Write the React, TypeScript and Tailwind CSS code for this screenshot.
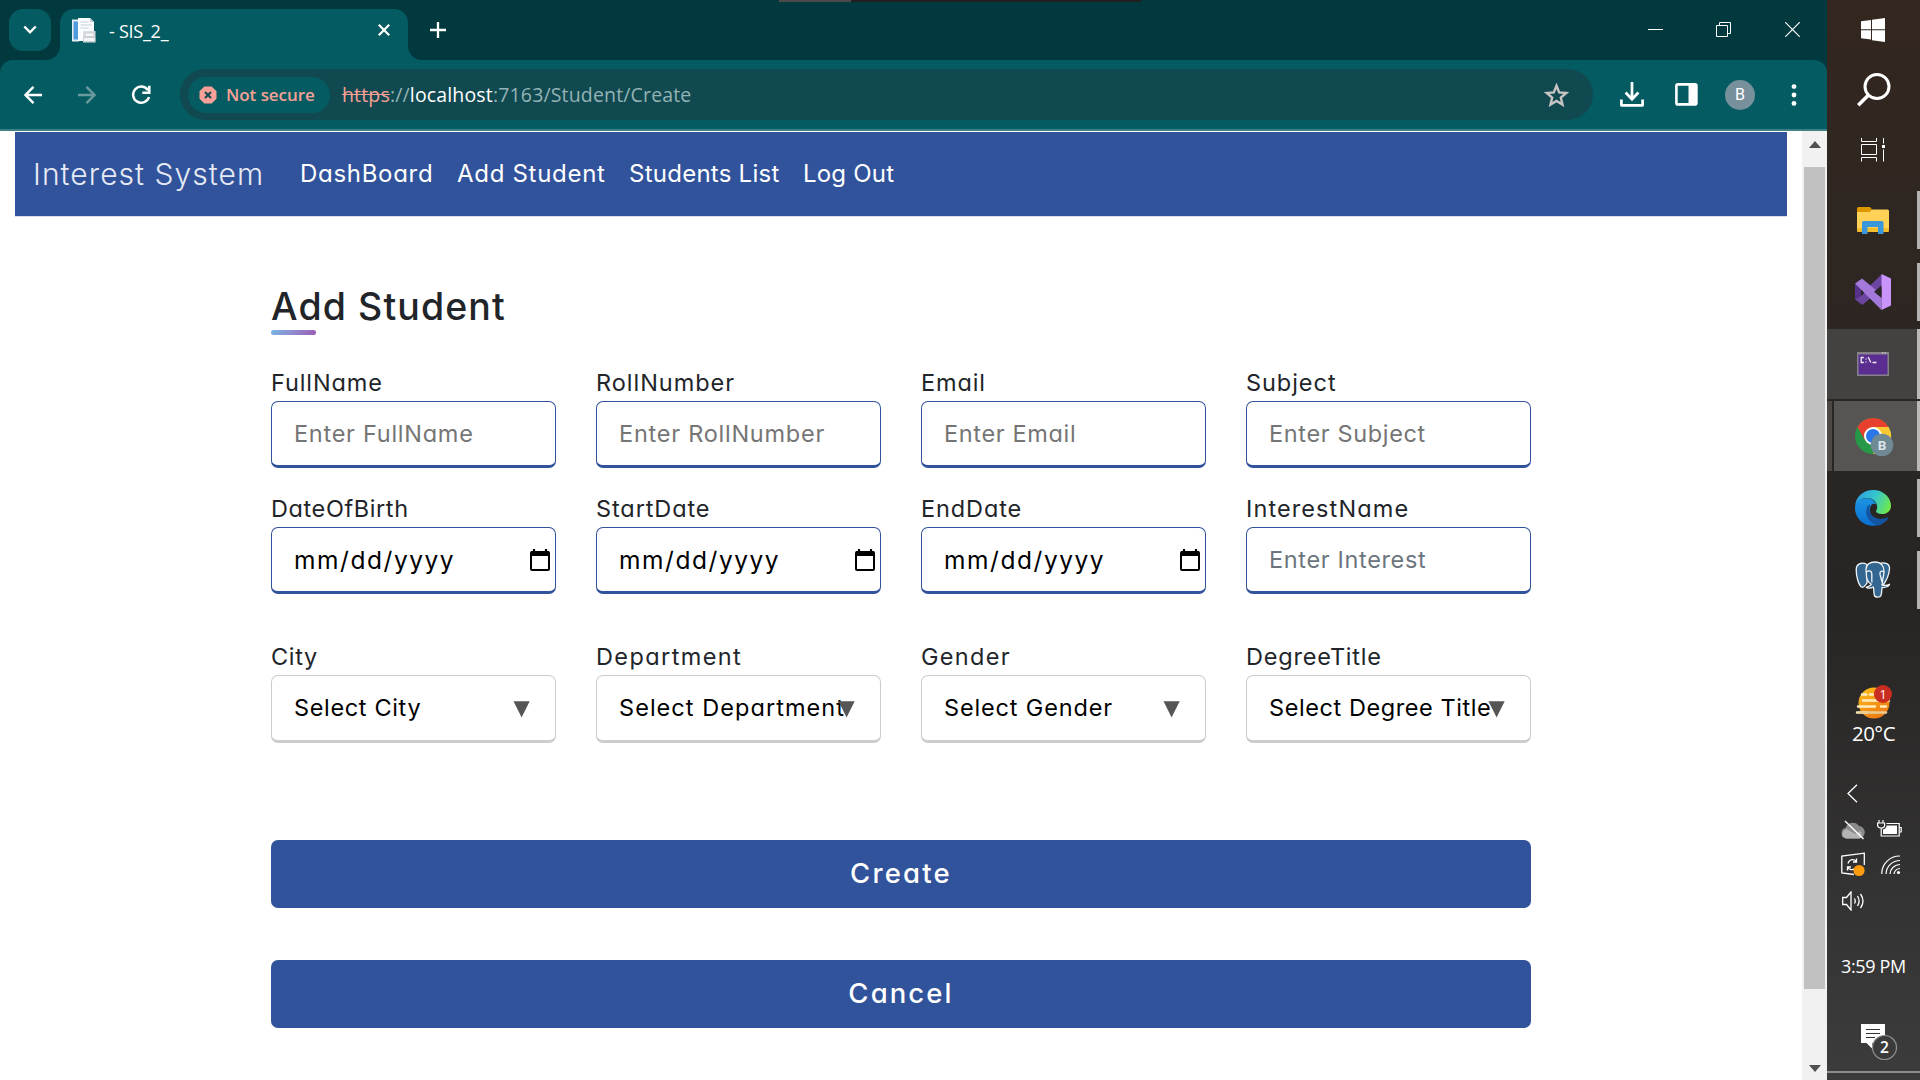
import type { ReactNode } from "react";

type TextSpec = { text: string; track: string };

type FieldSpec = {
  label: TextSpec;
  value: TextSpec;
  kind: "text" | "date" | "select";
  tone?: string;
};

const inputRows: FieldSpec[][] = [
  [
    { label: { text: "FullName", track: "tracking-[0.9px]" }, value: { text: "Enter FullName", track: "tracking-[0.73px]" }, kind: "text" },
    { label: { text: "RollNumber", track: "tracking-[0.97px]" }, value: { text: "Enter RollNumber", track: "tracking-[0.75px]" }, kind: "text" },
    { label: { text: "Email", track: "tracking-[0.85px]" }, value: { text: "Enter Email", track: "tracking-[0.65px]" }, kind: "text" },
    { label: { text: "Subject", track: "tracking-[0.95px]" }, value: { text: "Enter Subject", track: "tracking-[0.65px]" }, kind: "text" },
  ],
  [
    { label: { text: "DateOfBirth", track: "tracking-[0.6px]" }, value: { text: "mm/dd/yyyy", track: "tracking-[1.55px]" }, kind: "date" },
    { label: { text: "StartDate", track: "tracking-[0.9px]" }, value: { text: "mm/dd/yyyy", track: "tracking-[1.55px]" }, kind: "date" },
    { label: { text: "EndDate", track: "tracking-[0.9px]" }, value: { text: "mm/dd/yyyy", track: "tracking-[1.55px]" }, kind: "date" },
    { label: { text: "InterestName", track: "tracking-[1.1px]" }, value: { text: "Enter Interest", track: "tracking-[0.65px]" }, kind: "text", tone: "text-[#6c757d]" },
  ],
  [
    { label: { text: "City", track: "tracking-[0.7px]" }, value: { text: "Select City", track: "tracking-[0.65px]" }, kind: "select" },
    { label: { text: "Department", track: "tracking-[1.4px]" }, value: { text: "Select Department", track: "tracking-[1.05px]" }, kind: "select" },
    { label: { text: "Gender", track: "tracking-[1.3px]" }, value: { text: "Select Gender", track: "tracking-[0.85px]" }, kind: "select" },
    { label: { text: "DegreeTitle", track: "tracking-[0.8px]" }, value: { text: "Select Degree Title", track: "tracking-[0.58px]" }, kind: "select" },
  ],
];

function CalendarIcon() {
  return (
    <svg width="20" height="22" viewBox="0 0 20 22" fill="none">
      <path d="M4 0v4M16 0v4" stroke="#000" strokeWidth="2.2" />
      <rect x="1" y="3" width="18" height="18" rx="1" stroke="#000" strokeWidth="2" />
      <rect x="1" y="2" width="18" height="5" fill="#000" />
    </svg>
  );
}

function Field({ spec }: { spec: FieldSpec }) {
  const select = spec.kind === "select";
  return (
    <div className="w-[285px]">
      <div className={`h-[36px] text-[23.5px] leading-[36px] whitespace-nowrap text-[#212529] ${spec.label.track}`}>
        {spec.label.text}
      </div>
      <div
        className={`relative flex items-center rounded-[7px] border border-b-[3px] bg-white pl-[22px] ${
          select ? "h-[68px] border-[#ccc]" : "h-[67px] border-[#31539b]"
        }`}
      >
        <span
          className={`leading-[36px] whitespace-nowrap ${spec.kind === "date" ? "text-[24.5px]" : "text-[23.5px]"} ${spec.value.track} ${
            spec.kind === "text" ? (spec.tone ?? "text-[#757575]") : "text-black"
          }`}
        >
          {spec.value.text}
        </span>
        {spec.kind === "date" && (
          <div className="mr-[5px] ml-auto">
            <CalendarIcon />
          </div>
        )}
        {select && (
          <svg className="absolute top-[25px] right-[25px]" width="17" height="17" viewBox="0 0 17 17">
            <path d="M0.5 0.3h16.2L8.6 16.5z" fill="#555" />
          </svg>
        )}
      </div>
    </div>
  );
}

function Favicon() {
  return (
    <svg width="25" height="25" viewBox="0 0 25 25">
      <path d="M0 1.5h7v22H0z" fill="#e9eef4" />
      <path d="M1.5 3.500h5v18h-5z" fill="#4f9bdc" />
      <path d="M6 0h12l4 4v19H6z" fill="#fbfcfd" />
      <path d="M18 0v4h4z" fill="#c3ccd6" />
      <path d="M8.5 4h8M8.5 7h11M8.5 10h8" stroke="#d8dfe6" strokeWidth="1.4" />
      <path d="M11 13h12.5v11.5H11z" fill="#d9dee3" />
      <path d="M13 15h9v3.5h-9zM11.5 19.5h11.500v4h-11.500z" fill="#f5f6f7" stroke="#b7bec6" strokeWidth=".6" />
    </svg>
  );
}

function TabStrip() {
  return (
    <div className="flex h-[60px] w-[1827px] bg-[#02393e] pt-[9px] pl-[9px]">
      <div className="flex h-[42px] w-[42px] items-center justify-center rounded-[14px] bg-[#045c62]">
        <svg width="14" height="10" viewBox="0 0 14 10" fill="none" stroke="#fff" strokeWidth="2.4">
          <path d="M1.300 1.500 7 7.300l5.700-5.800" />
        </svg>
      </div>
      <div className="relative ml-[9px] flex h-[51px] w-[348px] items-center rounded-t-[14px] bg-[#045c62]">
        <svg className="absolute bottom-0 -left-[14px]" width="14" height="14" viewBox="0 0 14 14">
          <path d="M14 0v14H0A14 14 0 0 0 14 0z" fill="#045c62" />
        </svg>
        <svg className="absolute -right-[14px] bottom-0" width="14" height="14" viewBox="0 0 14 14">
          <path d="M0 0v14h14A14 14 0 0 1 0 0z" fill="#045c62" />
        </svg>
        <div className="mb-[9px] ml-[12px]">
          <Favicon />
        </div>
        <span className="mb-[8px] ml-[12px] font-['Open_Sans'] text-[18px] leading-6 tracking-[-0.25px] whitespace-nowrap text-white">- SIS_2_</span>
        <svg className="mr-[18px] mb-[9px] ml-auto" width="12" height="12" viewBox="0 0 12 12" stroke="#fff" strokeWidth="2.200">
          <path d="m.8.8 10.400 10.400M11.200.8.8 11.200" />
        </svg>
      </div>
      <svg className="mt-[13px] ml-[22px]" width="16" height="16" viewBox="0 0 16 16" stroke="#fff" strokeWidth="2.300">
        <path d="M8 0v16M0 8h16" />
      </svg>
      <svg className="mt-[13px] ml-auto" width="15" height="15" viewBox="0 0 15 15">
        <path d="M0 7h15v1H0z" fill="#fff" />
      </svg>
      <svg className="mt-[13px] ml-[53px]" width="15" height="15" viewBox="0 0 15 15" fill="none" stroke="#fff">
        <path d="M.5 3.500h11v11h-11zM3.500 3.500v-3h11v11h-3" />
      </svg>
      <svg className="mt-[13px] mr-[27px] ml-[54px]" width="15" height="15" viewBox="0 0 15 15" stroke="#fff" strokeWidth="1.200">
        <path d="m.3.3 14.400 14.400M14.700.3.3 14.700" />
      </svg>
    </div>
  );
}

function Toolbar() {
  return (
    <div className="bg-[#02393e]">
      <div className="flex h-[71px] w-[1827px] items-center rounded-t-[13px] border-b-2 border-[#3b8186] bg-[#045c62] pl-[24px]">
        <svg width="18" height="18" viewBox="0 0 18 18" fill="none" stroke="#fff" strokeWidth="2.400">
          <path d="M18 9H1.800M9.500.9 1.500 9l8 8.100" />
        </svg>
        <svg className="ml-[36px]" width="18" height="18" viewBox="0 0 18 18" fill="none" stroke="#6a9a9e" strokeWidth="2.400">
          <path d="M0 9h16.200M8.500.9l8 8.100-8 8.100" />
        </svg>
        <svg className="ml-[35px]" width="20" height="20" viewBox="0 0 20 20" fill="none" stroke="#fff" strokeWidth="2.500">
          <path d="M17 5.200A8.100 8.100 0 1 0 18 12" />
          <path d="M18.300.8v7h-7" />
        </svg>
        <div className="ml-[29px] flex h-[51px] w-[1413px] items-center rounded-full bg-[#10494f] pr-[24px] pl-[8px]">
          <div className="flex h-[36px] w-[142px] items-center rounded-full bg-[#045c62] pl-[11px]">
            <svg width="18" height="18" viewBox="0 0 18 18">
              <path d="M5.300.5h7.400l4.800 4.800v7.400l-4.800 4.800H5.300L.5 12.700V5.300z" fill="#f7a097" />
              <path d="m6 6 6 6M12 6l-6 6" stroke="#10494f" strokeWidth="2" />
            </svg>
            <span className="ml-[9px] font-['Open_Sans'] text-[17px] leading-6 font-semibold tracking-[-0.05px] whitespace-nowrap text-[#f7a097]">
              Not secure
            </span>
          </div>
          <div className="ml-[12px] font-['Open_Sans'] text-[19.500px] leading-7 tracking-[0.16px] whitespace-nowrap text-[#94b3b5]">
            <span className="text-[#f7a097] line-through">https</span>://<span className="text-white">localhost</span>:7163/Student/Create
          </div>
          <svg className="ml-auto" width="25" height="24" viewBox="0 0 25 24" fill="none" stroke="#c7c4c3" strokeWidth="2.400">
            <path d="m12.500 2.800 2.700 6.600 7 .6-5.400 4.600 1.700 7-6-3.700-6 3.700 1.700-7L2.800 10l7-.6z" />
          </svg>
        </div>
        <svg className="ml-[27px]" width="24" height="26" viewBox="0 0 24 26" fill="none" stroke="#fff" strokeWidth="2.700">
          <path d="M12 0v17M5.600 10.500l6.400 6.700 6.400-6.700" />
          <path d="M1.400 17.500v5.800h21.200v-5.800" strokeLinejoin="round" />
        </svg>
        <svg className="ml-[31px]" width="23" height="23" viewBox="0 0 23 23">
          <rect x="1.400" y="1.400" width="20" height="20" rx="1.500" fill="none" stroke="#fff" strokeWidth="2.600" />
          <path d="M13.500 1h8v21h-8z" fill="#fff" />
        </svg>
        <div className="ml-[27px] flex h-[30px] w-[30px] items-center justify-center rounded-full bg-[#78909c] font-[Roboto] text-[16px] leading-none text-white">B</div>
        <svg className="ml-[36px]" width="6" height="22" viewBox="0 0 6 22" fill="#fff">
          <circle cx="3" cy="2.600" r="2.400" />
          <circle cx="3" cy="11" r="2.400" />
          <circle cx="3" cy="19.400" r="2.400" />
        </svg>
      </div>
    </div>
  );
}

function SiteNav() {
  return (
    <nav className="mt-px ml-[15px] flex h-[85px] w-[1772px] items-center border-b border-[#dcdfea] bg-[#31539b] pl-[18px] whitespace-nowrap text-white">
      <span className="w-[267px] text-[30px] leading-[44px] font-light tracking-[1.05px] text-[#e6eaf4]">Interest System</span>
      <span className="w-[157px] text-[24px] leading-9 tracking-[0.7px]">DashBoard</span>
      <span className="w-[172px] text-[24px] leading-9 tracking-[0.7px]">Add Student</span>
      <span className="w-[174px] text-[24px] leading-9 tracking-[0.25px]">Students List</span>
      <span className="text-[24px] leading-9 tracking-[0.2px]">Log Out</span>
    </nav>
  );
}

function Scrollbar() {
  return (
    <div className="flex w-[25px] flex-col items-center bg-[#f1f1f1]">
      <svg className="mt-[10px]" width="12" height="7" viewBox="0 0 12 7">
        <path d="M0 7h12L6 0z" fill="#505050" />
      </svg>
      <div className="mt-[19px] h-[822px] w-[21px] bg-[#c1c1c1]" />
      <svg className="mt-[76px]" width="12" height="7" viewBox="0 0 12 7">
        <path d="M0 0h12L6 7z" fill="#505050" />
      </svg>
    </div>
  );
}

function TaskItem({ children, bar, className = "h-[72px] pr-[2px]" }: { children: ReactNode; bar?: string; className?: string }) {
  return (
    <div className={`relative flex w-[93px] shrink-0 items-center justify-center ${className}`}>
      {children}
      {bar && <div className={`absolute right-0 w-[3px] ${bar}`} />}
    </div>
  );
}

function Taskbar() {
  return (
    <aside className="flex h-[1080px] w-[93px] flex-col bg-linear-to-b from-[#33271f] via-[#272524] via-55% to-[#3c3c3c]">
      <TaskItem className="h-[60px] pr-px">
        <svg width="24" height="24" viewBox="0 0 24 24" fill="#fff">
          <path d="M0 3.300 10 1.900v9.300H0zM11 1.700 24 0v11.200H11zM0 12.300h10v9.300L0 20.300zM11 12.300h13V24l-13-1.800z" />
        </svg>
      </TaskItem>
      <TaskItem className="h-[60px]">
        <svg width="34" height="34" viewBox="0 0 34 34" fill="none" stroke="#fff" strokeWidth="3">
          <circle cx="20" cy="13.500" r="12" />
          <path d="M11.500 22 1.200 32.300" strokeWidth="3.600" />
        </svg>
      </TaskItem>
      <TaskItem className="h-[60px] pr-px">
        <svg width="24" height="24" viewBox="0 0 24 24" fill="none" stroke="#fff">
          <path d="M.5 0v3.500h15V0M.5 6.500h15v10H.5zM.5 23.500v-4h15v4M22.500 0v5.500M22.500 11.500v12" />
          <path d="M21 7h3v3h-3z" fill="#fff" stroke="none" />
        </svg>
      </TaskItem>
      <div className="h-[4px] shrink-0" />
      <TaskItem bar="h-[58px] bg-[#b5b3b1]">
        <svg width="32" height="28" viewBox="0 0 32 28">
          <path d="M0 2.500Q0 1 1.500 1H13l2 2.500-2 3H0z" fill="#dd9700" />
          <path d="M0 6h12.500l2.500-2.500h15.500Q32 3.500 32 5v19q0 2-1.500 2h-29Q0 26 0 24z" fill="#ffd257" />
          <path d="M0 22h32v2q0 2-1.500 2h-29Q0 26 0 24z" fill="#f6bd2b" />
          <path d="M5 28V16.500Q5 15 6.500 15h18.500q1.500 0 1.500 1.500V28h-5.500v-7H10.500v7z" fill="#3a97db" />
        </svg>
      </TaskItem>
      <TaskItem bar="h-[58px] bg-[#b5b3b1]">
        <svg width="36" height="36" viewBox="0 0 36 36">
          <path d="M0 10.500 0 25.500l7.500 5.500L27 14V0L13 13.500z" fill="#6b45a0" />
          <path d="M0 10.500 6 14v8l-6 3.500z" fill="#553287" />
          <path d="M6 14v8l5-4.500z" fill="#2b2626" />
          <path d="M0 9.500 7 4.500 26.500 20.500v15.500z" fill="#a578dc" />
          <path d="M26.500 0 36 4.500v27L26.500 36z" fill="#c893fb" />
          <path d="M26.500 11.500v12.500L19 17.800z" fill="#2b2626" />
        </svg>
      </TaskItem>
      <TaskItem bar="h-full bg-[#bbb9b7]" className="my-px h-[70px] bg-[#444240] pr-[2px]">
        <svg width="32" height="24" viewBox="0 0 32 24">
          <path d="M0 0h32v24H0z" fill="#85828a" />
          <path d="M1.500 2.500h29v20h-29z" fill="#5b2d90" />
          <path d="M25 1h1.500M27.500 1H29" stroke="#ddd" />
          <path d="M6.800 5.500H4.200v5h2.600M9 6.500v1M9 9.500v1M11.200 5l2.600 5.500M15.500 10.500h4" stroke="#eee" strokeWidth="1.300" fill="none" />
        </svg>
      </TaskItem>
      <div className="flex h-[72px] shrink-0 py-px">
        <div className="mr-[2px] h-[70px] w-[5px] bg-[#4b4846]" />
        <div className="relative flex h-[70px] w-[86px] items-center bg-[#575553] pl-[21px]">
          <svg width="40" height="40" viewBox="0 0 40 40">
            <circle cx="18" cy="20" r="18" fill="#279847" />
            <path d="M2.400 11A18 18 0 0 1 33.600 11H18L10.200 24.500z" fill="#e8402f" />
            <path d="M33.600 11A18 18 0 0 1 18 38L25.800 24.500 18 11z" fill="#fcc934" />
            <circle cx="18" cy="20" r="9" fill="#fff" />
            <circle cx="18" cy="20" r="7" fill="#2a77ea" />
            <circle cx="27" cy="29" r="11.300" fill="#6f8995" />
            <text x="27" y="34" textAnchor="middle" fontFamily="Roboto" fontWeight="700" fontSize="13.500" fill="#dde4e8">B</text>
          </svg>
          <div className="absolute right-0 h-[70px] w-[3px] bg-[#bbb9b7]" />
        </div>
      </div>
      <TaskItem bar="h-[58px] bg-[#b5b3b1]">
        <svg width="36" height="36" viewBox="0 0 36 36">
          <defs>
            <linearGradient id="edgeTop" x1="0" y1=".3" x2="1" y2=".6">
              <stop offset="0" stopColor="#2b9fe0" />
              <stop offset=".5" stopColor="#34c6cf" />
              <stop offset="1" stopColor="#6fe94b" />
            </linearGradient>
            <linearGradient id="edgeLeft" x1="0" y1="0" x2="0" y2="1">
              <stop offset="0" stopColor="#1b95e2" />
              <stop offset="1" stopColor="#0b6fd0" />
            </linearGradient>
          </defs>
          <path d="M0 16C1 6 9 0 18 0c11 0 18 8 18 15.500 0 6-4.500 8.500-9 8.500-4 0-6-1.500-6-2.700 0-1 1.200-1.600 1.200-4C22 11 17 8 11.500 8 6 8 2 11 0 16z" fill="url(#edgeTop)" />
          <path d="M0 18C0 11 6 8.300 11 8.300c5.500 0 9 2.700 10 6-2-1.200-6-.5-6 5.700C15 27 21 34 24 35 11 38.500 0 30 0 18z" fill="url(#edgeLeft)" />
          <path d="M15 14c-7 4-5 19 9 21.500 4-1.500 7-4 9-7 .6-1-.2-1.500-1-1C22 32 14 25 14.500 19c0-2 .3-4 .5-5z" fill="#1256a3" />
        </svg>
      </TaskItem>
      <TaskItem bar="h-[58px] bg-[#b5b3b1]">
        <svg width="36" height="38" viewBox="0 0 36 38" fill="#336791" stroke="#f2f5f8" strokeWidth="1.300" strokeLinejoin="round">
          <path d="M24 2.500C30 .5 35 3 34.500 8c-.5 6-3.500 12-6 15.500l-5-1z" />
          <path d="M12 3.500C6 .5 1.200 3 1.200 9c0 6 2.300 15 5.300 17 2.500 1.500 4-2 5.500-4z" />
          <path d="M11 8c.5-4.500 4-7 9-7 6 0 9 4 9 9.500 0 4-1.500 6.500-1.500 10.500L27 24c3 .8 5.500.5 7.500-.7-.5 2-4 3.500-7.500 3.200-.3 3-.3 5.500-1 8-.7 2-6 2.500-6.700-.5-.7-3-.3-6-1-8-2 1.300-5 1.300-7 .3 2-1 4-1.300 5-3-3-2-4.800-5-4.800-8.300 0-3-.5-4-.5-7z" />
          <path d="M11.500 11c2-2 5-1.500 5.300 1.500.2 3-.3 6 .2 9M29 11c-2-1.500-4.500-1-4 2 .4 3 1.500 5 2 8" fill="none" />
        </svg>
      </TaskItem>

      <div className="mt-[68px] flex shrink-0 flex-col items-center">
        <svg width="38" height="36" viewBox="0 0 38 36">
          <defs>
            <linearGradient id="sun" x1="0" y1="0" x2=".6" y2="1">
              <stop offset="0" stopColor="#ffc21a" />
              <stop offset="1" stopColor="#ee7a12" />
            </linearGradient>
          </defs>
          <circle cx="19" cy="19" r="15.500" fill="url(#sun)" />
          <g stroke="#ffedc0" strokeWidth="2.400" strokeLinecap="round">
            <path d="M7 10.500h4.500M15 10.500h3M8 16.500h15M27 16.500h7M3 22.500h17M26 22.500h5M2 28.500h10" />
            <path d="M4 28.500h27" stroke="#e8cc92" />
          </g>
          <circle cx="28" cy="10" r="9" fill="#c92c20" />
          <text x="28" y="14.500" textAnchor="middle" fontFamily="Open Sans" fontSize="12.500" fill="#fff">1</text>
        </svg>
        <span className="mb-[2px] font-['Open_Sans'] text-[20.500px] leading-[26px] tracking-[-0.5px] text-white">20°C</span>
      </div>

      <div className="mt-[36px] ml-[14px] grid shrink-0 grid-cols-[36px_30px] gap-y-0">
        <svg className="col-span-2 ml-[6px]" width="11" height="19" viewBox="0 0 11 19" fill="none" stroke="#fff" strokeWidth="1.300">
          <path d="M10 .8 1 9.500l9 8.700" />
        </svg>
        <svg className="mt-[17px]" width="24" height="21" viewBox="0 0 24 21">
          <path d="M5.500 18.500a5.500 5.500 0 0 1-.8-10.800A7.500 7.500 0 0 1 18 6a6.300 6.300 0 0 1 .5 12.500z" fill="#8b8b8b" />
          <path d="M2 17a5.500 5.500 0 0 1 4-8l8 5 5-3a5 5 0 0 1 0 7.500H5z" fill="#b4b4b4" />
          <path d="M4 1l18.500 18" stroke="#fff" strokeWidth="1.400" />
        </svg>
        <svg className="mt-[17px]" width="25" height="19" viewBox="0 0 25 19" fill="none" stroke="#fff" strokeWidth="1.200">
          <path d="M2 0v3M6 0v3M.6 3h7v2.500Q7.600 8 4.200 8T.6 5.500zM4.200 8v8h18V3.500H9.500" />
          <path d="M6 14V9.500Q9.500 8.500 9.500 5.500H20V14z" fill="#fff" stroke="none" />
          <path d="M22.200 7.500h2v4.500h-2" />
        </svg>
        <svg className="mt-[11px]" width="26" height="25" viewBox="0 0 26 25" fill="none" stroke="#fff" strokeWidth="1.300">
          <path d="M13 22.500.8 21V4L23.300 1.200V13" />
          <path d="M7 11.500C8.500 6.500 14 6.500 15.500 10M15.500 6.500V10H12M14 16.500c-2.500 2-6 1.500-7.500-1.500M6.500 18.500V15H10" />
          <circle cx="18" cy="18.500" r="5.600" fill="#ff9b0c" stroke="none" />
        </svg>
        <svg className="mt-[14px] ml-[4px]" width="20" height="20" viewBox="0 0 20 20" fill="none" stroke="#fff" strokeWidth="1.200">
          <path d="M.7 19A18 18 0 0 1 19 1M5 19A14 14 0 0 1 19 5.500M9 19A10 10 0 0 1 19 9.500M13 19a6 6 0 0 1 6-5.500" />
          <circle cx="17.500" cy="17.500" r="1.600" fill="#fff" stroke="none" />
        </svg>
        <svg className="mt-[14px] ml-px" width="24" height="20" viewBox="0 0 24 20" fill="none" stroke="#fff" strokeWidth="1.300">
          <path d="M.7 6.500h3.800L9 1v18l-4.500-5.500H.7z" />
          <path d="M12.500 7.500q1.500 2.500 0 5M15.500 5q3.200 5 0 10M18.500 3q5 7 0 14" />
        </svg>
      </div>

      <span className="mt-[43px] ml-[14px] shrink-0 font-['Open_Sans'] text-[18px] leading-6 tracking-[-0.35px] whitespace-nowrap text-white">3:59 PM</span>
      <svg className="mt-[44px] ml-[34px] shrink-0" width="38" height="40" viewBox="0 0 38 40">
        <path d="M0 2h24v19H11v5.500L5.500 21H0z" fill="#fff" />
        <path d="M5 7.500h14M5 11.500h14M5 15.500h9" stroke="#333" strokeWidth="1.200" />
        <circle cx="23.500" cy="25.500" r="12" fill="#3b3b3b" stroke="#929292" strokeWidth="1.200" />
        <text x="23.500" y="31" textAnchor="middle" fontFamily="Open Sans" fontWeight="600" fontSize="15.500" fill="#fff">2</text>
      </svg>
      <div className="mt-[9px] h-[2px] shrink-0 bg-[#8b8c8b]" />
    </aside>
  );
}

export default function App() {
  return (
    <div className="relative flex h-[1080px] w-[1920px] overflow-hidden bg-white">
      <div className="absolute top-0 left-[779px] flex h-[2px] w-[362px] bg-[#231f20]">
        <div className="w-[72px] bg-[#4d4a4b]" />
      </div>
      <div className="flex w-[1827px] flex-col">
        <TabStrip />
        <Toolbar />
        <div className="flex min-h-0 flex-1 font-[Inter] [font-feature-settings:'cv11']">
          <main className="w-[1802px]">
            <SiteNav />
            <div className="ml-[271px] w-[1260px] pt-[62px]">
              <h1 className="h-[51px] text-[37.500px] leading-[56px] font-medium tracking-[1.1px] whitespace-nowrap text-[#212529]">Add Student</h1>
              <div className="h-[5px] w-[45px] rounded-[3px] bg-linear-135 from-[#71b7e6] to-[#9b59b6]" />
              <div className="mt-[30px] grid grid-cols-4 gap-x-[40px]">
                {inputRows[0].map((f) => (
                  <Field key={f.label.text} spec={f} />
                ))}
              </div>
              <div className="mt-[23px] grid grid-cols-4 gap-x-[40px]">
                {inputRows[1].map((f) => (
                  <Field key={f.label.text} spec={f} />
                ))}
              </div>
              <div className="mt-[45px] grid grid-cols-4 gap-x-[40px]">
                {inputRows[2].map((f) => (
                  <Field key={f.label.text} spec={f} />
                ))}
              </div>
              <button className="mt-[97px] flex h-[68px] w-full items-center justify-center rounded-[7px] bg-[#31539b] text-[27.500px] font-medium tracking-[2.2px] text-white">
                Create
              </button>
              <button className="mt-[52px] flex h-[68px] w-full items-center justify-center rounded-[7px] bg-[#31539b] text-[27.500px] font-medium tracking-[2.1px] text-white">
                Cancel
              </button>
            </div>
          </main>
          <Scrollbar />
        </div>
      </div>
      <Taskbar />
    </div>
  );
}
